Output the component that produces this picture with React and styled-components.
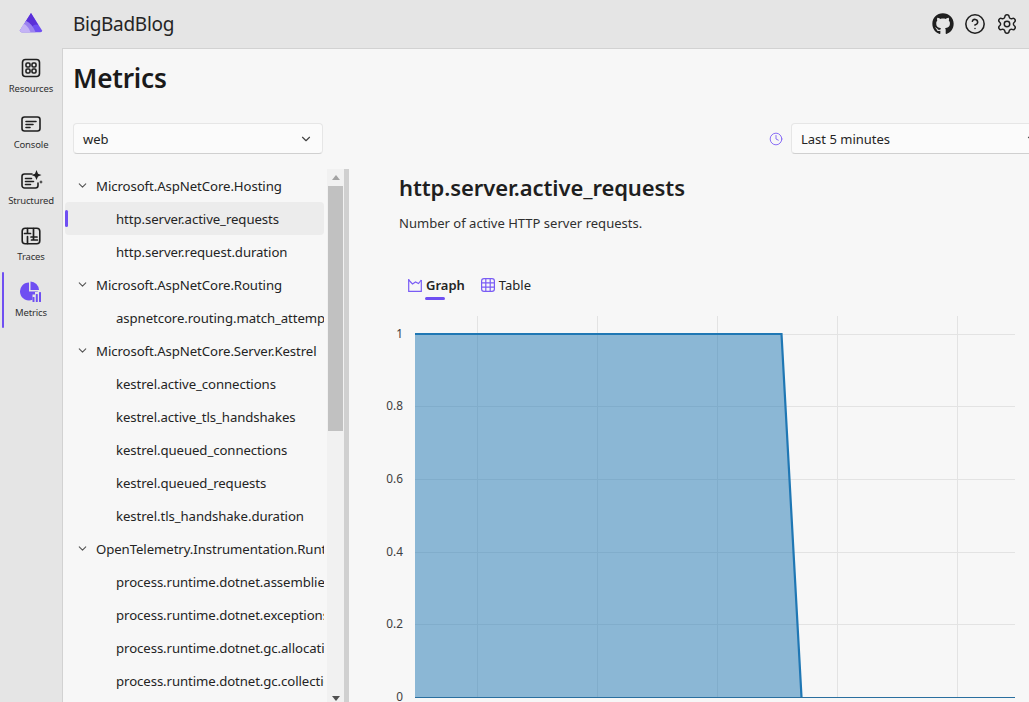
import React from "react";
import styled, { createGlobalStyle } from "styled-components";
import { FaGithub } from "react-icons/fa";
import { ChevronDown, Settings, CircleHelp, Clock } from "lucide-react";

const Global = createGlobalStyle`
  html, body { margin: 0; padding: 0; height: 100%; overflow: hidden; background: #e5e5e5; }
  #root { height: 100%; }
  * { box-sizing: border-box; }
`;
const Shell = styled.div`
  width: 1029px; height: 702px; overflow: hidden; display: flex; flex-direction: column;
  font-family: "Noto Sans", "Open Sans", sans-serif; color: #242424; font-size: 13px;
`;
const Header = styled.header`
  height: 48px; flex: none; display: flex; align-items: center; background: #e5e5e5; padding-right: 11px;
`;
const LogoCell = styled.div`width: 62px; flex: none; display: flex; justify-content: center; padding-bottom: 3px;`;
const AppName = styled.div`
  margin-left: 11px; font-size: 19px; line-height: 26px; letter-spacing: -.3px; color: #242424; flex: 1;
`;
const HeaderIcons = styled.div`display: flex; gap: 10px; align-items: center; color: #1f1f1f;`;
const Body = styled.div`flex: 1; display: flex; min-height: 0;`;
const Rail = styled.nav`width: 62px; flex: none; display: flex; flex-direction: column;`;
const RailItem = styled.div`
  height: 56px; position: relative; display: flex; flex-direction: column; align-items: center; justify-content: flex-start;
  padding-top: 10px; color: ${p => (p.$active ? "#6f4ff2" : "#1f1f1f")};
  &::before {
    content: ""; display: ${p => (p.$active ? "block" : "none")}; position: absolute; left: 2px; top: 0; bottom: 0; width: 2px; background: #6f4ff2; border-radius: 1px;
  }
`;
const RailLabel = styled.span`
  margin-top: 4px; font-size: 9.5px; line-height: 13px; letter-spacing: -.15px; color: #303030;
`;
const Main = styled.main`
  flex: 1; min-width: 0; background: #f7f7f7; border-left: 1px solid #d2d2d2; border-top: 1px solid #d2d2d2; display: flex; flex-direction: column; padding-left: 10px;
`;
const Title = styled.h1`margin: 11px 0 0; font-size: 26.2px; line-height: 36px; font-weight: 600; color: #1a1a1a; letter-spacing: -.2px;`;
const FilterRow = styled.div`display: flex; align-items: center; justify-content: space-between; margin-top: 27px; height: 31px; flex: none;`;
const Select = styled.div`
  height: 31px; background: #fbfbfb; border: 1px solid #e6e6e6; border-bottom-color: #d0d0d0; border-radius: 4px;
  display: flex; align-items: center; justify-content: space-between; padding: 0 9px; width: ${p => p.$w}px; flex: none;
  font-size: 13px; color: #242424;
`;
const TimeGroup = styled.div`display: flex; align-items: center; gap: 8px; margin-right: -20px; color: #7a5cf5;`;
const Columns = styled.div`flex: 1; display: flex; min-height: 0; margin-top: 15px; margin-left: -8px;`;
const TreePane = styled.div`width: 259px; margin-right: 4px; flex: none; overflow: hidden; position: relative;`;
const Row = styled.div`
  height: 33px; display: flex; align-items: center; border-radius: 4px; position: relative; white-space: nowrap; overflow: hidden;
  padding-left: ${p => (p.$leaf ? "51px" : "11px")}; font-size: 13.2px; letter-spacing: -.08px; color: #242424;
  background: ${p => (p.$selected ? "#ececec" : "transparent")};
  &::before {
    content: ""; display: ${p => (p.$selected ? "block" : "none")}; position: absolute; left: 0; top: 8px; bottom: 8px; width: 3px; border-radius: 2px; background: #6f4ff2;
  }
`;
const Chev = styled.span`width: 20px; flex: none; display: flex; color: #555;`;
const Scrollbar = styled.div`
  width: 17px; flex: none; background: #f1f1f1; display: flex; flex-direction: column; align-items: center; margin-left: -1px;
`;
const Arrow = styled.div`
  width: 0; height: 0; border-left: 4px solid transparent; border-right: 4px solid transparent;
  ${p => (p.$down ? "border-top: 5px solid #505050; margin-top: auto; margin-bottom: 1px;" : "border-bottom: 5px solid #a3a3a3; margin-top: 6px;")}
`;
const Thumb = styled.div`width: 15px; height: 245px; background: #c1c1c1; margin-top: 6px;`;
const Splitter = styled.div`width: 5px; flex: none; background: #d0d0d0;`;
const Detail = styled.section`flex: 1; min-width: 0; padding-left: 50px; position: relative;`;
const DetailTitle = styled.h2`margin: 3px 0 0; font-size: 22px; line-height: 30px; font-weight: 600; letter-spacing: -.1px; color: #1f1f1f;`;
const Desc = styled.p`margin: 11px 0 0; font-size: 13.05px; line-height: 20px; color: #303030;`;
const Tabs = styled.div`display: flex; gap: 16px; margin-top: 38px; height: 34px; padding-left: 9px;`;
const Tab = styled.div`
  display: flex; align-items: center; gap: 4px; height: 28px; position: relative; font-size: 13px;
  font-weight: ${p => (p.$active ? 600 : 400)}; color: #242424;
  &::after {
    content: ""; display: ${p => (p.$active ? "block" : "none")}; position: absolute; left: 17px; width: 20px; height: 3px; bottom: -1px; border-radius: 2px; background: #6f4ff2;
  }
`;
const ChartSvg = styled.svg`display: block; margin-left: -49px; margin-top: 11px; overflow: visible;`;

const Logo = () => (
  <svg width="24" height="21" viewBox="0 0 26 24" preserveAspectRatio="none">
    <path d="M13 1 L25 21 Q25.5 23 23 23 L3 23 Q.5 23 1 21 Z" fill="#6f4ff2" />
    <path d="M13 1 L21 15 Q17 13 14 17 Q10 12 7 11 Z" fill="#5a2fd8" />
    <path d="M7.5 10 Q14 13 18 23 L3 23 Q.5 23 1 21 Z" fill="#9b82ef" />
    <path d="M5 13.5 Q10 16 12.5 23 L3 23 Q.5 23 1 21 Z" fill="#c4b3f5" />
  </svg>
);
const S = { fill: "none", stroke: "currentColor", strokeWidth: 1.6, strokeLinecap: "round", strokeLinejoin: "round" };
const ResourcesIcon = () => (
  <svg width="20" height="20" viewBox="0 0 20 20" {...S}>
    <rect x="1.5" y="1.5" width="17" height="17" rx="3" />
    <rect x="5" y="5" width="4" height="4" rx="1.2" /><rect x="11" y="5" width="4" height="4" rx="1.2" />
    <rect x="5" y="11" width="4" height="4" rx="1.2" /><rect x="11" y="11" width="4" height="4" rx="1.2" />
  </svg>
);
const ConsoleIcon = () => (
  <svg width="20" height="20" viewBox="0 0 20 20" {...S}>
    <rect x="1" y="3" width="18" height="14" rx="2.5" />
    <path d="M5 7.5h10M5 10.5h7M5 13.5h4" />
  </svg>
);
const StructuredIcon = () => (
  <svg width="22" height="20" viewBox="0 0 22 20" {...S} style={{ marginRight: -2 }}>
    <path d="M11 4H3.5A2.5 2.5 0 0 0 1 6.5v9A2.5 2.5 0 0 0 3.5 18h11a2.5 2.5 0 0 0 2.5-2.5V13" />
    <path d="M4.5 8.5h6M4.5 11.5h8M4.5 14.5h5" />
    <path d="M15.5 0l1.5 3.7 3.5 1.3-3.5 1.5L15.5 10 14 6.5 10.5 5 14 3.7z" fill="currentColor" stroke="none" />
    <path d="M20 10l.6 1.4 1.4.6-1.4.6L20 14l-.6-1.4-1.4-.6 1.4-.6z" fill="currentColor" stroke="none" />
  </svg>
);
const TracesIcon = () => (
  <svg width="20" height="20" viewBox="0 0 20 20" {...S}>
    <rect x="1.2" y="2.2" width="17.6" height="15.6" rx="3" />
    <path d="M6.5 2.5v5M3.5 7.5h6M6.5 10.5v7M10 11h6M12.5 2.5v11.5M10.5 14h6" strokeWidth="1.7" />
  </svg>
);
const MetricsIcon = () => (
  <svg width="22" height="22" viewBox="0 0 22 22" fill="#6f4ff2" style={{ marginTop: -1, marginBottom: -1 }}>
    <path d="M9 1.5A9 9 0 1 0 12.5 18.8V13.5H15V11h2.6A9 9 0 0 0 18 10.5H9z" />
    <path d="M10.5 0.5A9 9 0 0 1 19 9h-8.5z" />
    <rect x="12.5" y="16" width="2" height="5" rx=".6" />
    <rect x="15.8" y="13" width="2" height="8" rx=".6" />
    <rect x="19" y="11" width="2" height="10" rx=".6" />
  </svg>
);
const GraphIcon = () => (
  <svg width="14" height="14" viewBox="0 0 14 14" fill="none" stroke="#7a5cf5" strokeWidth="1.2">
    <path d="M.7 1v12.3h12.6V2" />
    <path d="M.7 2l3.8 4 3-2 3 1.5 2.8-3.5" />
  </svg>
);
const TableIcon = () => (
  <svg width="14" height="14" viewBox="0 0 14 14" fill="none" stroke="#7a5cf5" strokeWidth="1.2">
    <rect x=".6" y=".6" width="12.8" height="12.8" rx="2.4" />
    <path d="M4.8.6v12.8M9.2.6v12.8M.6 4.8h12.8M.6 9.2h12.8" />
  </svg>
);

const tree = [
  ["Microsoft.AspNetCore.Hosting", false],
  ["http.server.active_requests", true, true],
  ["http.server.request.duration", true],
  ["Microsoft.AspNetCore.Routing", false],
  ["aspnetcore.routing.match_attempts", true],
  ["Microsoft.AspNetCore.Server.Kestrel", false],
  ["kestrel.active_connections", true],
  ["kestrel.active_tls_handshakes", true],
  ["kestrel.queued_connections", true],
  ["kestrel.queued_requests", true],
  ["kestrel.tls_handshake.duration", true],
  ["OpenTelemetry.Instrumentation.Runtime", false],
  ["process.runtime.dotnet.assemblies.count", true],
  ["process.runtime.dotnet.exceptions.count", true],
  ["process.runtime.dotnet.gc.allocations.size", true],
  ["process.runtime.dotnet.gc.collections.count", true],
];
const rail = [
  ["Resources", ResourcesIcon], ["Console", ConsoleIcon], ["Structured", StructuredIcon],
  ["Traces", TracesIcon], ["Metrics", MetricsIcon, true],
];
const ticks = [["1", 334], ["0.8", 406], ["0.6", 479], ["0.4", 552], ["0.2", 624], ["0", 697]];
const vx = [477, 597, 717, 837, 957];

const Chart = () => {
  const ox = 350, oy = 316;
  return (
    <ChartSvg width="680" height="400" viewBox={`${ox} ${oy} 680 400`}>
      {ticks.slice(0, 5).map(([, y]) => <line key={y} x1="415" x2="1015" y1={y + .5} y2={y + .5} stroke="#e3e3e3" strokeWidth="1" />)}
      {vx.map(x => <line key={x} x1={x + .5} x2={x + .5} y1="316" y2="697" stroke="#e3e3e3" strokeWidth="1" />)}
      <path d="M415 334H781.5L801.5 697H415Z" fill="#1f77b4" fillOpacity=".5" />
      <path d="M415 334H781.5L801.5 697" fill="none" stroke="#1f77b4" strokeWidth="2.2" />
      <line x1="415" x2="1015" y1="697.5" y2="697.5" stroke="#2a6f9f" strokeWidth="1" />
      {ticks.map(([t, y]) => (
        <text key={t} x="403" y={y + 4} textAnchor="end" fontSize="11.8" fill="#404040" fontFamily="Noto Sans, sans-serif">{t}</text>
      ))}
    </ChartSvg>
  );
};

export default function App() {
  return (
    <Shell>
      <Global />
      <Header>
        <LogoCell><Logo /></LogoCell>
        <AppName>BigBadBlog</AppName>
        <HeaderIcons>
          <FaGithub size={22} />
          <CircleHelp size={22} strokeWidth={1.7} />
          <Settings size={22} strokeWidth={1.6} />
        </HeaderIcons>
      </Header>
      <Body>
        <Rail>
          {rail.map(([label, Icon, active]) => (
            <RailItem key={label} $active={active}>
              <Icon />
              <RailLabel>{label}</RailLabel>
            </RailItem>
          ))}
        </Rail>
        <Main>
          <Title>Metrics</Title>
          <FilterRow>
            <Select $w={250}><span>web</span><ChevronDown size={14} color="#444" /></Select>
            <TimeGroup>
              <Clock size={14} strokeWidth={1.5} />
              <Select $w={258}><span>Last 5 minutes</span><ChevronDown size={14} color="#444" /></Select>
            </TimeGroup>
          </FilterRow>
          <Columns>
            <TreePane>
              {tree.map(([text, leaf, selected]) => (
                <Row key={text} $leaf={leaf} $selected={selected}>
                  {!leaf && <Chev><ChevronDown size={13} /></Chev>}
                  {text}
                </Row>
              ))}
            </TreePane>
            <Scrollbar>
              <Arrow />
              <Thumb />
              <Arrow $down />
            </Scrollbar>
            <Splitter />
            <Detail>
              <DetailTitle>http.server.active_requests</DetailTitle>
              <Desc>Number of active HTTP server requests.</Desc>
              <Tabs>
                <Tab $active><GraphIcon />Graph</Tab>
                <Tab><TableIcon />Table</Tab>
              </Tabs>
              <Chart />
            </Detail>
          </Columns>
        </Main>
      </Body>
    </Shell>
  );
}
